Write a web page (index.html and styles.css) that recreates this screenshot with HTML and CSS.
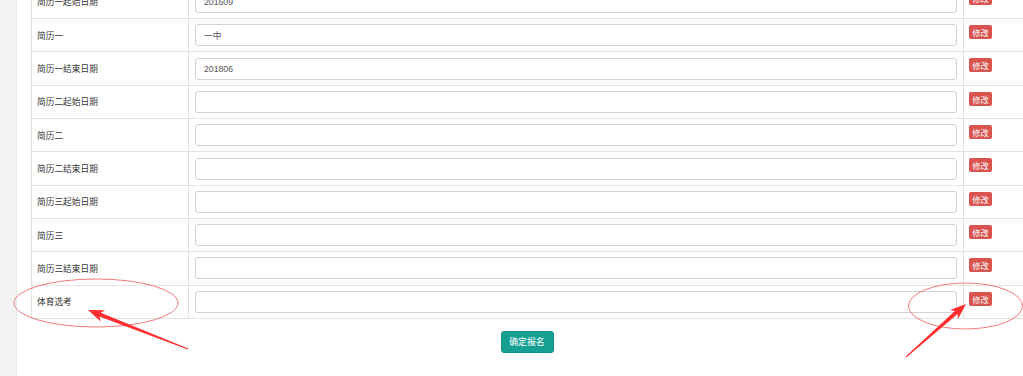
FILE: index.html
```html
<!DOCTYPE html>
<html lang="zh-CN">
<head>
<meta charset="utf-8">
<title>报名信息</title>
<link rel="stylesheet" href="styles.css">
</head>
<body>
<div class="layout">
  <aside class="sidebar"></aside>
  <main class="main">
    <table class="form-table">
      <colgroup><col class="c-label"><col class="c-input"><col class="c-btn"></colgroup>
      <tbody>
        <tr><td class="label">简历一起始日期</td><td class="field"><input class="inp" value="201609"></td><td class="act"><button class="btn-edit">修改</button></td></tr>
        <tr><td class="label">简历一</td><td class="field"><input class="inp" value="一中"></td><td class="act"><button class="btn-edit">修改</button></td></tr>
        <tr><td class="label">简历一结束日期</td><td class="field"><input class="inp" value="201806"></td><td class="act"><button class="btn-edit">修改</button></td></tr>
        <tr><td class="label">简历二起始日期</td><td class="field"><input class="inp" value=""></td><td class="act"><button class="btn-edit">修改</button></td></tr>
        <tr><td class="label">简历二</td><td class="field"><input class="inp" value=""></td><td class="act"><button class="btn-edit">修改</button></td></tr>
        <tr><td class="label">简历二结束日期</td><td class="field"><input class="inp" value=""></td><td class="act"><button class="btn-edit">修改</button></td></tr>
        <tr><td class="label">简历三起始日期</td><td class="field"><input class="inp" value=""></td><td class="act"><button class="btn-edit">修改</button></td></tr>
        <tr><td class="label">简历三</td><td class="field"><input class="inp" value=""></td><td class="act"><button class="btn-edit">修改</button></td></tr>
        <tr><td class="label">简历三结束日期</td><td class="field"><input class="inp" value=""></td><td class="act"><button class="btn-edit">修改</button></td></tr>
        <tr><td class="label">体育选考</td><td class="field"><input class="inp" value=""></td><td class="act"><button class="btn-edit">修改</button></td></tr>
      </tbody>
    </table>
    <div class="submit-row"><button class="btn-submit">确定报名</button></div>
  </main>
</div>
<svg class="annot" width="1023" height="376" viewBox="0 0 1023 376" xmlns="http://www.w3.org/2000/svg">
  <ellipse cx="96" cy="303" rx="82" ry="24" fill="none" stroke="#f07a7a" stroke-width="1"/>
  <ellipse cx="965.5" cy="306" rx="57" ry="23" fill="none" stroke="#f07a7a" stroke-width="1"/>
  <polygon fill="#ff2d2d" points="88,310 105.1,310.2 100.8,312.8 188.2,348.5 187.8,349.5 99.4,316.6 100.7,321.4"/>
  <polygon fill="#ff2d2d" points="966,304 958,319.1 957.6,314.1 906.3,357.4 905.7,356.6 954.9,311.1 950,310.1"/>
</svg>
</body>
</html>
```
FILE: styles.css
```css
html, body {
  margin: 0;
  padding: 0;
  overflow: hidden;
  background: #fff;
}
body {
  font-family: "Liberation Sans", "Noto Sans CJK SC", sans-serif;
  font-size: 8.7px;
  color: #333;
  position: relative;
}
.layout {
  display: flex;
  min-height: 376px;
}
.sidebar {
  width: 17px;
  flex: none;
  background: #f3f3f3;
  border-right: 1px solid #e8e8e8;
  box-sizing: border-box;
}
.main {
  flex: 1;
  padding-left: 14px;
  min-width: 0;
}
.form-table {
  width: 993px;
  border-collapse: collapse;
  table-layout: fixed;
  margin-top: -14.8px;
}
.c-label { width: 157px; }
.c-input { width: 775px; }
.c-btn { width: 61px; }
.form-table tr { height: 33.333px; }
.form-table td {
  border: 1px solid #e3e3e3;
  border-top: none;
  padding: 0 6px;
  vertical-align: middle;
}
.form-table td.label {
  padding-left: 5px;
}
.form-table td.act {
  vertical-align: top;
  padding-top: 6px;
  padding-left: 5px;
}
.inp {
  display: block;
  width: 100%;
  height: 22px;
  box-sizing: border-box;
  border: 1px solid #d2d2d2;
  border-radius: 3px;
  padding: 0 8px;
  font-family: "Liberation Sans", "Noto Sans CJK SC", sans-serif;
  font-size: 8.7px;
  color: #555;
  background: #fff;
  outline: none;
}
.btn-edit {
  display: block;
  width: 23px;
  height: 14px;
  padding: 0;
  border: none;
  border-radius: 2px;
  background: #d9534f;
  color: #fff;
  font-family: "Noto Sans CJK SC", sans-serif;
  font-size: 8.2px;
  line-height: 14px;
}
.submit-row {
  display: flex;
  justify-content: center;
  margin-top: 12px;
}
.btn-submit {
  width: 53px;
  height: 22px;
  padding: 0;
  border: 1px solid #0f9084;
  border-radius: 3px;
  background: #16a094;
  color: #fff;
  font-family: "Noto Sans CJK SC", sans-serif;
  font-size: 8.9px;
  line-height: 20px;
}
.annot {
  position: absolute;
  left: 0;
  top: 0;
  pointer-events: none;
}
```
